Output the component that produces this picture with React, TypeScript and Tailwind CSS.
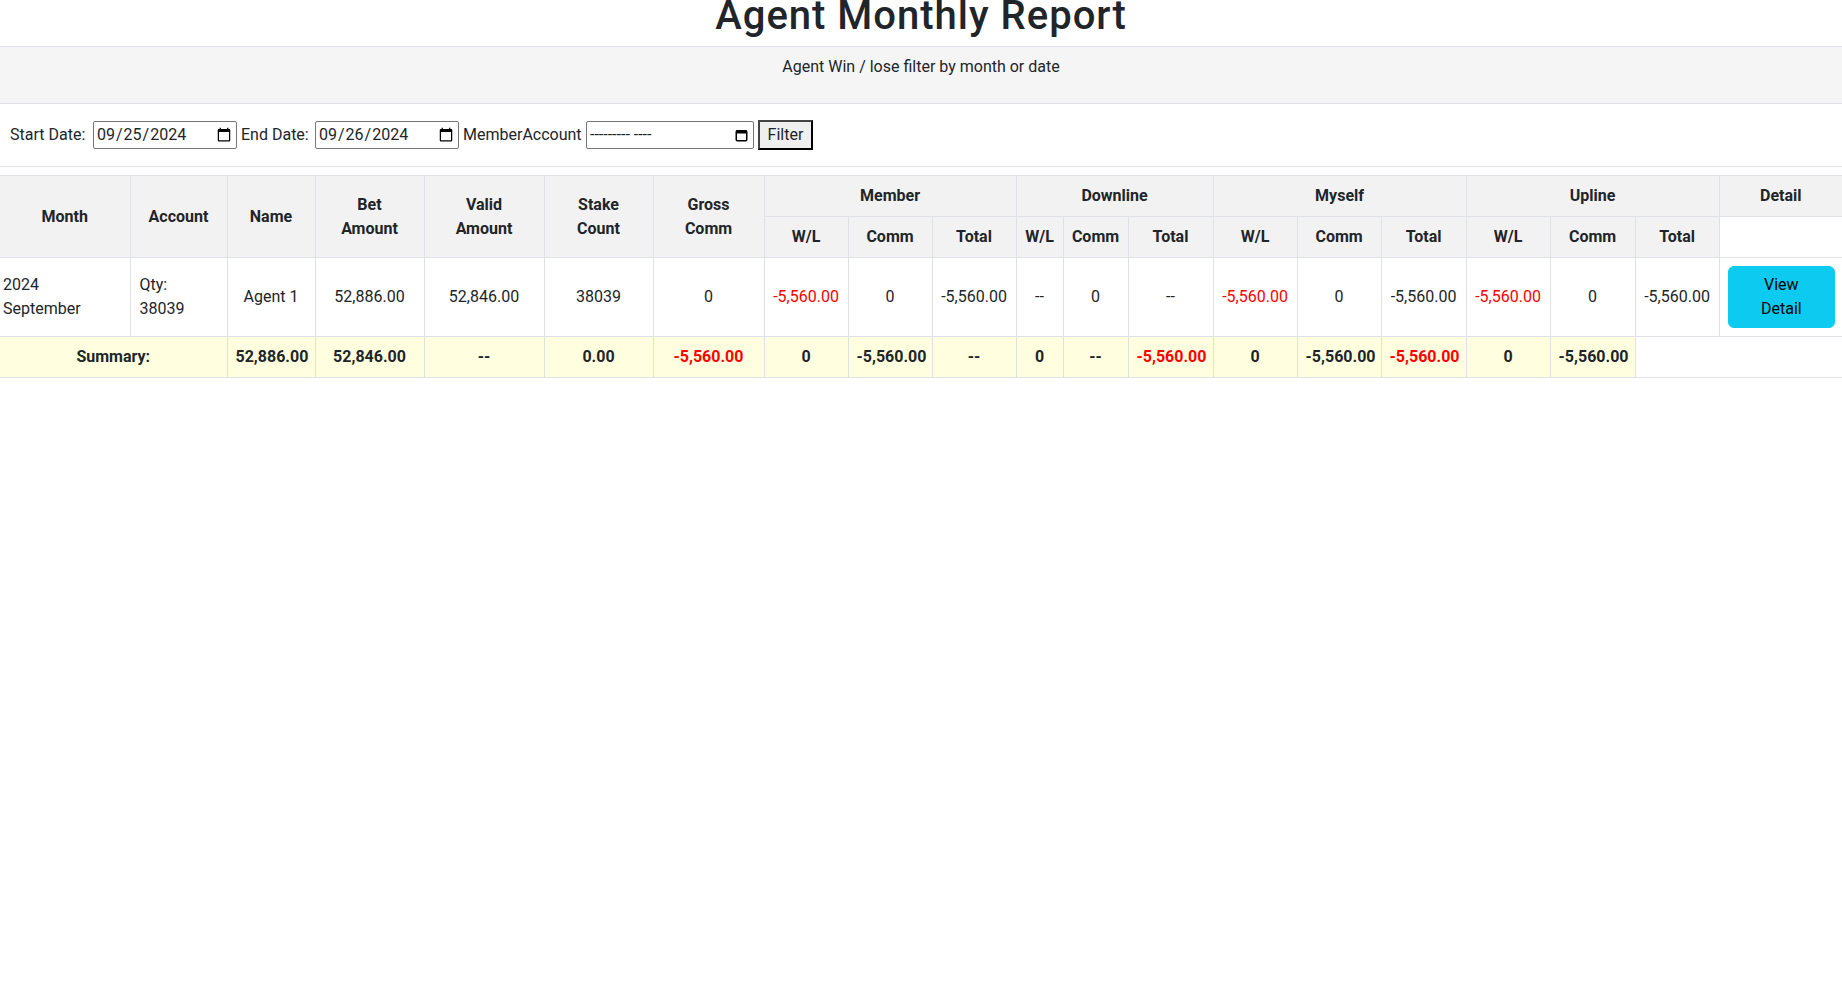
import React from "react";

const widths = [
  "w-[130px]", "w-[97px]", "w-[88px]", "w-[109px]", "w-[120px]", "w-[109px]", "w-[111px]",
  "w-[84px]", "w-[84px]", "w-[84px]",
  "w-[47px]", "w-[65px]", "w-[85px]",
  "w-[84px]", "w-[84px]", "w-[85px]",
  "w-[84px]", "w-[85px]", "w-[84px]",
  "w-[123px]",
];

const th = "border border-[#dee2e6] bg-[#f2f2f2] p-2 text-center align-middle font-bold leading-6";
const td = "border border-[#dee2e6] p-2 text-center align-middle leading-6";
const sm = "border border-[#dee2e6] bg-[#ffffe0] p-2 text-center align-middle font-bold leading-6";

function CalendarIcon() {
  return (
    <svg width="13" height="13" viewBox="0 0 13 13" className="shrink-0">
      <rect x="1.25" y="1.75" width="10.5" height="10" rx="1" fill="none" stroke="#000" strokeWidth="1.5" />
      <rect x="1" y="1.5" width="11" height="3" fill="#000" />
    </svg>
  );
}

export default function App() {
  const red = "text-[#ff0000]";
  return (
    <div className="flex flex-col font-[Roboto,sans-serif] text-[16px] text-[#212529] bg-white min-h-[1001px]">
      <h1 className="-mt-[8px] mb-[6px] text-center text-[40px] leading-[48px] font-medium tracking-[1px]">Agent Monthly Report</h1>

      <div className="border-y border-[#dee2e6] bg-[#f5f5f5] pt-2 pb-6 text-center leading-6">
        Agent Win / lose filter by month or date
      </div>

      <div className="flex items-center gap-1 py-4 pl-[10px] border-b border-[#dee2e6]">
        <span className="w-[79px] whitespace-nowrap">Start Date:</span>
        <input type="date" defaultValue="2024-09-25" className="w-[144px] h-[28px] border border-[#767676] rounded-[2px] px-[2px] bg-white" />
        <span className="w-[70px] whitespace-nowrap">End Date:</span>
        <input type="date" defaultValue="2024-09-26" className="w-[144px] h-[28px] border border-[#767676] rounded-[2px] px-[2px] bg-white" />
        <span className="w-[119px] whitespace-nowrap">MemberAccount</span>
        <div className="flex w-[168px] h-[28px] items-center justify-between border border-[#767676] rounded-[2px] pl-[3px] pr-[5px] bg-white">
          <span className="whitespace-nowrap">--------- ----</span>
          <CalendarIcon />
        </div>
        <button className="w-[55px] h-[30px] border-2 border-black border-t-[#444] border-l-[#444] bg-[#efefef] leading-6">Filter</button>
      </div>

      <table className="mt-2 w-full table-fixed border-collapse">
        <colgroup>
          {widths.map((w, i) => (
            <col key={i} className={w} />
          ))}
        </colgroup>
        <thead>
          <tr>
            <th rowSpan={2} className={th + " border-l-0"}>Month</th>
            <th rowSpan={2} className={th}>Account</th>
            <th rowSpan={2} className={th}>Name</th>
            <th rowSpan={2} className={th}>Bet<br />Amount</th>
            <th rowSpan={2} className={th}>Valid<br />Amount</th>
            <th rowSpan={2} className={th}>Stake<br />Count</th>
            <th rowSpan={2} className={th}>Gross<br />Comm</th>
            <th colSpan={3} className={th}>Member</th>
            <th colSpan={3} className={th}>Downline</th>
            <th colSpan={3} className={th}>Myself</th>
            <th colSpan={3} className={th}>Upline</th>
            <th className={th + " border-r-0"}>Detail</th>
          </tr>
          <tr>
            <th className={th}>W/L</th>
            <th className={th}>Comm</th>
            <th className={th}>Total</th>
            <th className={th}>W/L</th>
            <th className={th}>Comm</th>
            <th className={th}>Total</th>
            <th className={th}>W/L</th>
            <th className={th}>Comm</th>
            <th className={th}>Total</th>
            <th className={th}>W/L</th>
            <th className={th}>Comm</th>
            <th className={th}>Total</th>
            <th className="border border-r-0 border-[#dee2e6] bg-white p-2"></th>
          </tr>
        </thead>
        <tbody>
          <tr>
            <td className="border border-l-0 border-[#dee2e6] py-2 px-[3px] text-left align-middle leading-6">
              <div>2024</div>
              <div>September</div>
            </td>
            <td className="border border-[#dee2e6] py-2 pl-[9px] pr-2 text-left align-middle leading-6">
              <div>Qty:</div>
              <div>38039</div>
            </td>
            <td className={td}>Agent 1</td>
            <td className={td}>52,886.00</td>
            <td className={td}>52,846.00</td>
            <td className={td}>38039</td>
            <td className={td}>0</td>
            <td className={td + " " + red}>-5,560.00</td>
            <td className={td}>0</td>
            <td className={td}>-5,560.00</td>
            <td className={td}>--</td>
            <td className={td}>0</td>
            <td className={td}>--</td>
            <td className={td + " " + red}>-5,560.00</td>
            <td className={td}>0</td>
            <td className={td}>-5,560.00</td>
            <td className={td + " " + red}>-5,560.00</td>
            <td className={td}>0</td>
            <td className={td}>-5,560.00</td>
            <td className="border border-r-0 border-[#dee2e6] pl-2 pr-[7px] py-2 align-middle">
              <button className="w-full rounded-[6px] border border-[#0dcaf0] bg-[#0dcaf0] px-3 py-[6px] text-center leading-6 text-black">
                <span className="block">View</span>
                <span className="block">Detail</span>
              </button>
            </td>
          </tr>
          <tr>
            <td colSpan={2} className={sm + " border-l-0"}>Summary:</td>
            <td className={sm}>52,886.00</td>
            <td className={sm}>52,846.00</td>
            <td className={sm}>--</td>
            <td className={sm}>0.00</td>
            <td className={sm + " " + red}>-5,560.00</td>
            <td className={sm}>0</td>
            <td className={sm}>-5,560.00</td>
            <td className={sm}>--</td>
            <td className={sm}>0</td>
            <td className={sm}>--</td>
            <td className={sm + " " + red}>-5,560.00</td>
            <td className={sm}>0</td>
            <td className={sm}>-5,560.00</td>
            <td className={sm + " " + red}>-5,560.00</td>
            <td className={sm}>0</td>
            <td className={sm}>-5,560.00</td>
            <td colSpan={2} className="border-y border-[#dee2e6] p-2"></td>
          </tr>
        </tbody>
      </table>
    </div>
  );
}
